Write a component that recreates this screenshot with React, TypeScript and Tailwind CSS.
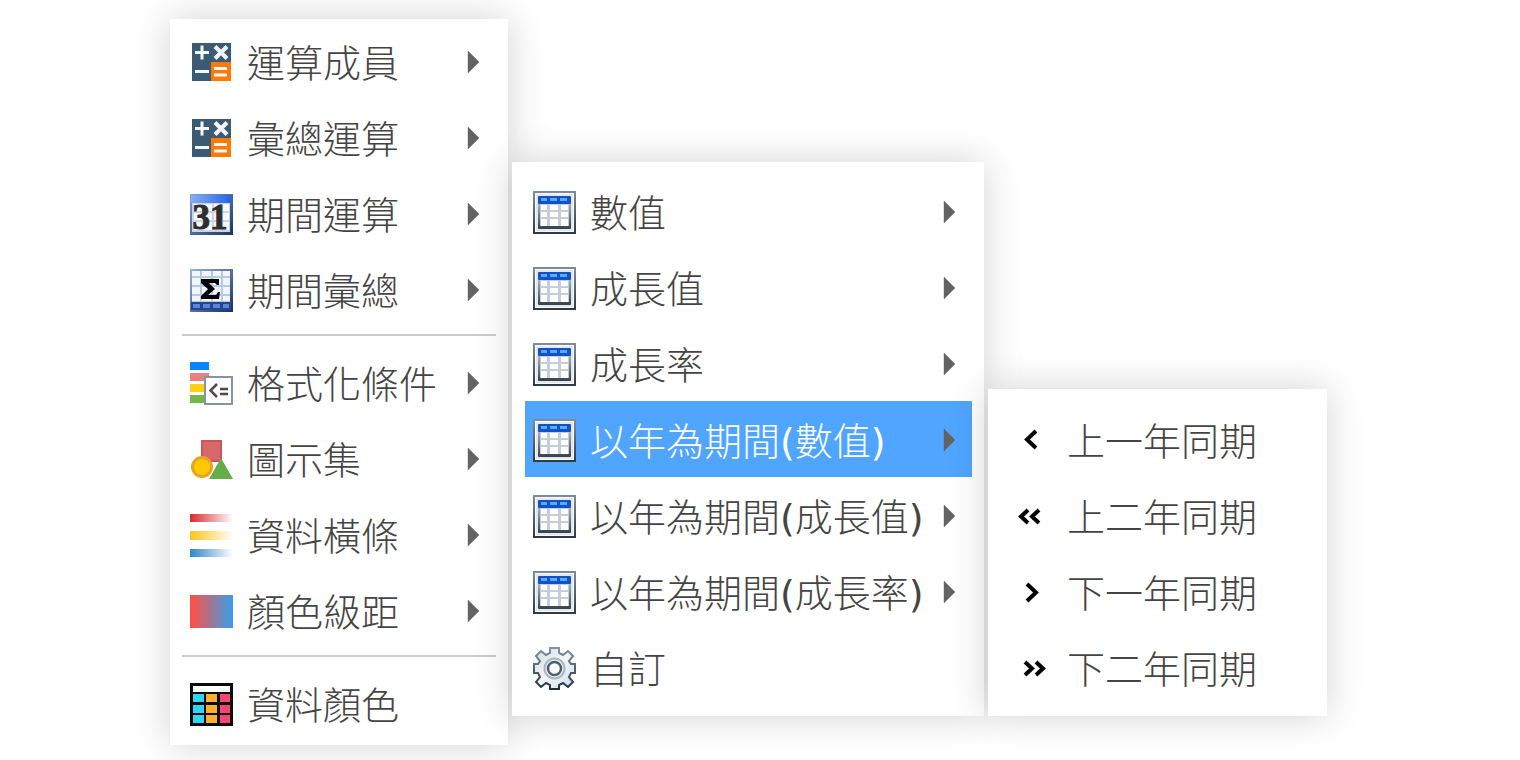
import type { ReactNode } from "react";

const iconClass = "w-[43px] h-[43px] shrink-0";

function CalcIcon() {
  return (
    <svg viewBox="0 0 43 43" className={iconClass} aria-hidden="true">
      <rect x="2" y="2" width="39" height="38" fill="#3b5b74" />
      <rect x="21" y="21" width="20" height="19" fill="#ff7a05" />
      <g stroke="#f4f7fa" strokeWidth="3" fill="none">
        <path d="M5 11.500h14M12 4.500v14M5 30.500h14" />
        <path d="M25 5.500l12 12M37 5.500l-12 12" strokeWidth="4" />
        <path d="M24 27.500h13M24 34h13" />
      </g>
    </svg>
  );
}

function CalendarIcon() {
  return (
    <svg viewBox="0 0 43 43" className={iconClass} aria-hidden="true">
      <defs>
        <linearGradient id="cal-top" x1="0" y1="0" x2="1" y2="0">
          <stop offset="0" stopColor="#86aef5" />
          <stop offset="1" stopColor="#2463e3" />
        </linearGradient>
        <linearGradient id="cal-edge" x1="0" y1="0" x2="1" y2="1">
          <stop offset="0" stopColor="#7fa4dc" />
          <stop offset="1" stopColor="#1b3460" />
        </linearGradient>
      </defs>
      <rect y="1" width="43" height="41" fill="url(#cal-edge)" />
      <rect x="1" y="2" width="40" height="8" fill="url(#cal-top)" />
      <rect x="2" y="10" width="38" height="29" fill="#cbd3e4" />
      <g fill="#f6f9fe">
        <path d="M4 11h8v7H4zM14 11h8v7h-8zM24 11h7v7h-7zM33 11h6v7h-6z" />
        <path d="M4 20h8v7H4zM14 20h8v7h-8zM24 20h7v7h-7zM33 20h6v7h-6z" />
        <path d="M4 29h8v8H4zM14 29h8v8h-8zM24 29h7v8h-7zM33 29h6v8h-6z" />
      </g>
      <text
        x="20"
        y="36"
        textAnchor="middle"
        fontFamily="Liberation Serif, serif"
        fontWeight="bold"
        fontSize="35"
        fill="#2f2f2f"
        stroke="#2f2f2f"
      >
        31
      </text>
    </svg>
  );
}

function SigmaIcon() {
  return (
    <svg viewBox="0 0 43 43" className={iconClass} aria-hidden="true">
      <defs>
        <linearGradient id="sum-edge" x1="0" y1="0" x2="1" y2="1">
          <stop offset="0" stopColor="#9bb4dc" />
          <stop offset="1" stopColor="#16305e" />
        </linearGradient>
      </defs>
      <rect width="43" height="43" fill="url(#sum-edge)" />
      <rect x="2" y="2" width="38" height="31" fill="#b9c8e4" />
      <g fill="#f1f5fd">
        <path d="M2 2h8v5H2zM12 2h9v5h-9zM23 2h8v5h-8zM33 2h7v5h-7z" />
        <path d="M2 9h8v7H2zM12 9h9v7h-9zM23 9h8v7h-8zM33 9h7v7h-7z" />
        <path d="M2 18h8v7H2zM12 18h9v7h-9zM23 18h8v7h-8zM33 18h7v7h-7z" />
        <path d="M2 27h8v5H2zM12 27h9v5h-9zM23 27h8v5h-8zM33 27h7v5h-7z" />
      </g>
      <rect x="1" y="33" width="40" height="8" fill="#25468f" />
      <path d="M3 35h7v4H3zM13 35h7v4h-7zM23 35h7v4h-7zM33 35h6v4h-6z" fill="#5a83dd" />
      <path d="M11 10h18v6h-2l-2-2h-6l6 6-7 6h8l2-3h2l-1 7H11v-3l7-7-7-6z" fill="#000" />
    </svg>
  );
}

function FormatIcon() {
  return (
    <svg viewBox="0 0 43 43" className={iconClass} aria-hidden="true">
      <rect width="19" height="8" fill="#0a84ff" />
      <rect y="11" width="19" height="8" fill="#eb8080" />
      <rect y="22" width="19" height="8" fill="#ffcf12" />
      <rect y="33" width="19" height="8" fill="#74b84b" />
      <rect x="15" y="15" width="27" height="27" fill="#fff" stroke="#8195a3" strokeWidth="2" />
      <path d="M27 22l-6.500 6.500L27 35M30 27h8M30 32h8" stroke="#504a4a" strokeWidth="2.500" fill="none" />
    </svg>
  );
}

function ShapesIcon() {
  return (
    <svg viewBox="0 0 43 43" className={iconClass} aria-hidden="true">
      <rect x="12" y="3" width="19" height="20" fill="#d9686b" stroke="#cb5559" strokeWidth="2" />
      <circle cx="12" cy="29" r="9.500" fill="#ffc900" stroke="#e7a322" strokeWidth="3" />
      <path d="M31 20l12 21H19z" fill="#64ad4a" />
    </svg>
  );
}

function BarsIcon() {
  return (
    <svg viewBox="0 0 43 43" className={iconClass} aria-hidden="true">
      <defs>
        <linearGradient id="bar-red">
          <stop offset="0" stopColor="#d92a2a" />
          <stop offset="1" stopColor="#fff" />
        </linearGradient>
        <linearGradient id="bar-yellow">
          <stop offset="0" stopColor="#f8c518" />
          <stop offset="1" stopColor="#fff" />
        </linearGradient>
        <linearGradient id="bar-blue">
          <stop offset="0" stopColor="#3484c6" />
          <stop offset="1" stopColor="#fff" />
        </linearGradient>
      </defs>
      <rect width="43" height="8" fill="url(#bar-red)" />
      <rect y="17" width="43" height="9" fill="url(#bar-yellow)" />
      <rect y="35" width="43" height="8" fill="url(#bar-blue)" />
    </svg>
  );
}

function ScaleIcon() {
  return (
    <svg viewBox="0 0 43 43" className={iconClass} aria-hidden="true">
      <defs>
        <linearGradient id="scale">
          <stop offset="0.050" stopColor="#fb5247" />
          <stop offset="0.950" stopColor="#409be6" />
        </linearGradient>
      </defs>
      <rect y="5" width="43" height="33" fill="url(#scale)" />
    </svg>
  );
}

function PaletteIcon() {
  return (
    <svg viewBox="0 0 43 43" className={iconClass} aria-hidden="true">
      <rect width="43" height="43" fill="#0a0a0a" />
      <rect x="3" y="3" width="37" height="6" fill="#fff" />
      {[11, 22, 32].map((y) => (
        <g key={y}>
          <rect x="3" y={y} width="11" height="8" fill="#2fd5fb" />
          <rect x="16" y={y} width="11" height="8" fill="#fdb02b" />
          <rect x="30" y={y} width="10" height="8" fill="#fd4377" />
        </g>
      ))}
    </svg>
  );
}

function TableIcon() {
  return (
    <svg viewBox="0 0 43 43" className={iconClass} aria-hidden="true">
      <defs>
        <linearGradient id="frame" x1="0" y1="0" x2="0" y2="1">
          <stop offset="0" stopColor="#7f8c99" />
          <stop offset="1" stopColor="#2c3a48" />
        </linearGradient>
        <linearGradient id="table-body" x1="0" y1="0" x2="0" y2="1">
          <stop offset="0" stopColor="#a9b5c2" />
          <stop offset="1" stopColor="#34414f" />
        </linearGradient>
      </defs>
      <rect width="43" height="43" fill="url(#frame)" />
      <rect x="2" y="2" width="39" height="39" fill="#fafafa" />
      <rect x="3" y="3" width="37" height="37" fill="#e6e7e9" />
      <rect x="5" y="12" width="33" height="26" rx="1" fill="url(#table-body)" />
      <rect x="7" y="13" width="29" height="22" fill="#c5ced8" />
      <g fill="#fff">
        <path d="M8 14h6v5H8zM17 14h8v5h-8zM28 14h7v5h-7z" />
        <path d="M8 21h6v5H8zM17 21h8v5h-8zM28 21h7v5h-7z" />
        <path d="M8 28h6v7H8zM17 28h8v7h-8zM28 28h7v7h-7z" />
      </g>
      <rect x="5" y="5" width="33" height="8" rx="1" fill="#1450c8" />
      <path d="M8 7h6v3H8zM17 7h7v3h-7zM27 7h7v3h-7z" fill="#4db0fb" />
    </svg>
  );
}

function GearIcon() {
  return (
    <svg viewBox="0 0 43 43" className={iconClass} aria-hidden="true">
      <defs>
        <linearGradient id="gear-line" x1="0" y1="0" x2="0" y2="1">
          <stop offset="0" stopColor="#8494a3" />
          <stop offset="1" stopColor="#1f2f3f" />
        </linearGradient>
        <linearGradient id="gear-fill" x1="0" y1="0" x2="1" y2="1">
          <stop offset="0" stopColor="#d3d9e0" />
          <stop offset="0.500" stopColor="#f3f6fa" />
          <stop offset="1" stopColor="#cfdbe8" />
        </linearGradient>
      </defs>
      <path
        d="M17 1h9v5l4 2 5-4 5 5-4 5 2 3h4v9h-4l-2 4 4 5-5 5-5-4-4 2v4h-9v-4l-4-2-5 4-5-5 4-5-2-4H1v-9h4l2-3-4-5 5-5 5 4 4-2z"
        fill="url(#gear-fill)"
        stroke="url(#gear-line)"
        strokeWidth="2"
      />
      <circle cx="21.500" cy="21.500" r="10" fill="none" stroke="#aab6c2" strokeWidth="2" />
      <circle cx="21.500" cy="21.500" r="6.500" fill="#fff" stroke="#4d5e6e" strokeWidth="2.500" />
    </svg>
  );
}

function Chevron({ d }: { d: string }) {
  return (
    <svg viewBox="0 0 43 43" className={iconClass} aria-hidden="true">
      <path d={d} fill="none" stroke="#000" strokeWidth="4" />
    </svg>
  );
}

interface Item {
  label: string;
  icon: ReactNode;
  submenu?: boolean;
  active?: boolean;
}

// null draws a separator line
const mainMenu: (Item | null)[] = [
  { label: "運算成員", icon: <CalcIcon />, submenu: true },
  { label: "彙總運算", icon: <CalcIcon />, submenu: true },
  { label: "期間運算", icon: <CalendarIcon />, submenu: true },
  { label: "期間彙總", icon: <SigmaIcon />, submenu: true },
  null,
  { label: "格式化條件", icon: <FormatIcon />, submenu: true },
  { label: "圖示集", icon: <ShapesIcon />, submenu: true },
  { label: "資料橫條", icon: <BarsIcon />, submenu: true },
  { label: "顏色級距", icon: <ScaleIcon />, submenu: true },
  null,
  { label: "資料顏色", icon: <PaletteIcon /> },
];

const periodMenu: Item[] = [
  { label: "數值", icon: <TableIcon />, submenu: true },
  { label: "成長值", icon: <TableIcon />, submenu: true },
  { label: "成長率", icon: <TableIcon />, submenu: true },
  { label: "以年為期間(數值)", icon: <TableIcon />, submenu: true, active: true },
  { label: "以年為期間(成長值)", icon: <TableIcon />, submenu: true },
  { label: "以年為期間(成長率)", icon: <TableIcon />, submenu: true },
  { label: "自訂", icon: <GearIcon /> },
];

const yearMenu: Item[] = [
  { label: "上一年同期", icon: <Chevron d="M26 12l-9 8.500 9 8.500" /> },
  { label: "上二年同期", icon: <Chevron d="M18 15l-7 6.500 7 6.500M29 15l-7 6.500 7 6.500" /> },
  { label: "下一年同期", icon: <Chevron d="M17 13l9 8.500-9 8.500" /> },
  { label: "下二年同期", icon: <Chevron d="M15 15l7 6.500-7 6.500M26 15l7 6.500-7 6.500" /> },
];

function MenuItem({ item }: { item: Item }) {
  return (
    <button
      type="button"
      role="menuitem"
      aria-haspopup={item.submenu ? "menu" : undefined}
      className={`flex w-full h-[76px] items-center gap-[14px] pt-0.5 pl-2 pr-4 text-left ${
        item.active ? "bg-[#4fa5ff] text-white" : "text-[#444444]"
      }`}
    >
      {item.icon}
      <span className="flex-1 whitespace-nowrap pt-1 text-[38px] leading-[44px] font-light">
        {/* brackets are set in the regular weight */}
        {item.label.split(/([()])/).map((part, index) =>
          part === "(" || part === ")" ? (
            <span key={index} className="font-normal">
              {part}
            </span>
          ) : (
            part
          )
        )}
      </span>
      {item.submenu && (
        <svg viewBox="0 0 13 24" className="w-[13px] h-6 shrink-0" aria-hidden="true">
          <path d="M1 1l11 11L1 23z" fill="#636363" stroke="#636363" strokeOpacity="0.4" />
        </svg>
      )}
    </button>
  );
}

function Menu({ label, items, className }: { label: string; items: (Item | null)[]; className: string }) {
  return (
    <div
      role="menu"
      aria-label={label}
      className={`shrink-0 bg-white shadow-[0_0_36px_rgba(0,0,0,0.18)] ${className}`}
    >
      {items.map((item, index) =>
        item ? (
          <MenuItem key={index} item={item} />
        ) : (
          <hr key={index} className="mt-[7px] mb-2 border-0 border-t-2 border-[#cccccc]" />
        )
      )}
    </div>
  );
}

export default function App() {
  return (
    <main className="flex min-h-screen items-start gap-1 bg-white pt-[19px] pl-[170px] font-['DejaVu_Sans','Noto_Sans_CJK_TC',sans-serif]">
      <Menu label="運算" items={mainMenu} className="min-w-[338px] px-3 pt-1 pb-1" />
      <Menu label="期間運算" items={periodMenu} className="mt-[143px] min-w-[472px] pl-[13px] pr-3 py-[11px]" />
      <Menu label="以年為期間" items={yearMenu} className="mt-[370px] min-w-[339px] pl-[14px] pr-3 pt-3 pb-[11px]" />
    </main>
  );
}
